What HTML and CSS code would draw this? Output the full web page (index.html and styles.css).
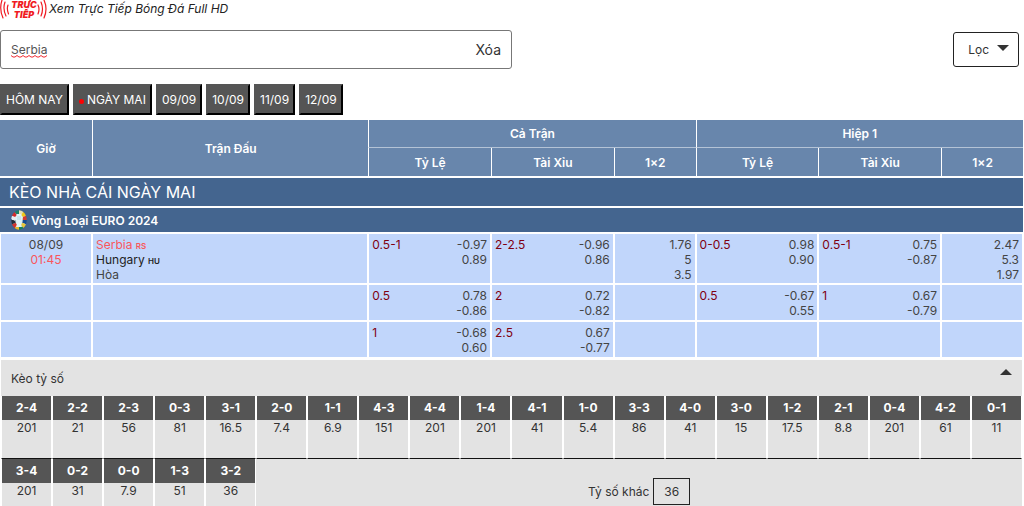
FILE: index.html
```html
<!DOCTYPE html>
<html lang="vi">
<head>
<meta charset="utf-8">
<title>Kèo nhà cái ngày mai</title>
<link rel="stylesheet" href="styles.css">
</head>
<body>
<a class="live" href="#">
  <svg class="live-logo" viewBox="0 0 47 20" aria-label="Trực tiếp" role="img">
    <g fill="none" stroke="#f01a22" stroke-width="1.2" stroke-linecap="round">
      <path d="M2 0Q-1 9 3 18M5 2Q2.500 9 6 16M8 5Q6.500 9 8.500 14"/>
      <path d="M44 0Q48 9 44 18M41 2Q44 9 41 16M38 5Q40 9 38 14"/>
    </g>
    <text x="24" y="8" class="logo-text">TRỰC</text>
    <text x="24" y="18" class="logo-text">TIẾP</text>
  </svg>
  <span>Xem Trực Tiếp Bóng Đá Full HD</span>
</a>

<form class="filters">
  <div class="search">
    <input class="search-input" type="text" value="Serbia" aria-label="Tìm kiếm">
    <svg class="squiggle" viewBox="0 0 36 3" aria-hidden="true"><path d="M0 .5L2 2L4 2L6 .5L8 2L10 2L12 .5L14 2L16 2L18 .5L20 2L22 2L24 .5L26 2L28 2L30 .5L32 2L34 2L36 .5"/></svg>
    <button class="clear" type="button">Xóa</button>
  </div>
  <button class="filter" type="button">Lọc <svg class="caret" viewBox="0 0 12 6"><path d="M0 0H12L6 6Z"/></svg></button>
</form>

<nav class="days">
  <button type="button">HÔM NAY</button>
  <button type="button"><i class="dot"></i>NGÀY MAI</button>
  <button type="button">09/09</button>
  <button type="button">10/09</button>
  <button type="button">11/09</button>
  <button type="button">12/09</button>
</nav>

<div class="odds-wrap">
<table class="odds">
  <colgroup><col class="w-time"><col class="w-match"><col class="w-odd"><col class="w-odd"><col class="w-x"><col class="w-odd"><col class="w-odd"><col class="w-x"></colgroup>
  <thead>
    <tr><th rowspan="2">Giờ</th><th rowspan="2">Trận Đấu</th><th class="group" colspan="3">Cả Trận</th><th class="group" colspan="3">Hiệp 1</th></tr>
    <tr><th>Tỷ Lệ</th><th>Tài Xỉu</th><th>1×2</th><th>Tỷ Lệ</th><th>Tài Xỉu</th><th>1×2</th></tr>
  </thead>
  <tbody>
    <tr class="title"><th colspan="8">KÈO NHÀ CÁI NGÀY MAI</th></tr>
    <tr class="league"><th colspan="8"><div class="league-name">
      <svg class="euro" viewBox="0 0 16 20" aria-hidden="true">
        <ellipse cx="8" cy="10" rx="7" ry="9" fill="#d9eef0"/>
        <g fill="none" stroke-width="4" stroke-dasharray="1 11">
          <ellipse cx="8" cy="10" rx="5.700" ry="7.700" pathLength="12" stroke="#174c91"/>
          <ellipse cx="8" cy="10" rx="5.700" ry="7.700" pathLength="12" stroke="#e9c63a" stroke-dashoffset="-1"/>
          <ellipse cx="8" cy="10" rx="5.700" ry="7.700" pathLength="12" stroke="#16805a" stroke-dashoffset="-2"/>
          <ellipse cx="8" cy="10" rx="5.700" ry="7.700" pathLength="12" stroke="#e9b92a" stroke-dashoffset="-3"/>
          <ellipse cx="8" cy="10" rx="5.700" ry="7.700" pathLength="12" stroke="#d2322c" stroke-dashoffset="-4"/>
          <ellipse cx="8" cy="10" rx="5.700" ry="7.700" pathLength="12" stroke="#262d3b" stroke-dashoffset="-5"/>
          <ellipse cx="8" cy="10" rx="5.700" ry="7.700" pathLength="12" stroke="#e8edf0" stroke-dashoffset="-6"/>
          <ellipse cx="8" cy="10" rx="5.700" ry="7.700" pathLength="12" stroke="#d42b2b" stroke-dashoffset="-7"/>
          <ellipse cx="8" cy="10" rx="5.700" ry="7.700" pathLength="12" stroke="#1b8068" stroke-dashoffset="-8"/>
          <ellipse cx="8" cy="10" rx="5.700" ry="7.700" pathLength="12" stroke="#e9e2b2" stroke-dashoffset="-9"/>
          <ellipse cx="8" cy="10" rx="5.700" ry="7.700" pathLength="12" stroke="#f0c818" stroke-dashoffset="-10"/>
          <ellipse cx="8" cy="10" rx="5.700" ry="7.700" pathLength="12" stroke="#d43b30" stroke-dashoffset="-11"/>
        </g>
        <path d="M5.500 4H10.500L10.500 5.500L12 7L11 10L9.500 12L10 14L11 17H5L6 14L6.500 12L5 10L4 7L5.500 5.500Z" fill="#dff3f6"/>
        <path d="M7 6V10M9 6V10" stroke="#9ccbd6" stroke-width=".6"/>
      </svg>
      Vòng Loại EURO 2024</div></th></tr>
    <tr>
      <td class="time">08/09<br><span class="hot">01:45</span></td>
      <td class="teams"><span class="hot">Serbia <small>RS</small></span><br><span class="away">Hungary <small>HU</small></span><br>Hòa</td>
      <td><div class="pair"><b>0.5-1</b><span>-0.97<br>0.89</span></div></td>
      <td><div class="pair"><b>2-2.5</b><span>-0.96<br>0.86</span></div></td>
      <td class="x12">1.76<br>5<br>3.5</td>
      <td><div class="pair"><b>0-0.5</b><span>0.98<br>0.90</span></div></td>
      <td><div class="pair"><b>0.5-1</b><span>0.75<br>-0.87</span></div></td>
      <td class="x12">2.47<br>5.3<br>1.97</td>
    </tr>
    <tr>
      <td></td><td></td>
      <td><div class="pair"><b>0.5</b><span>0.78<br>-0.86</span></div></td>
      <td><div class="pair"><b>2</b><span>0.72<br>-0.82</span></div></td>
      <td></td>
      <td><div class="pair"><b>0.5</b><span>-0.67<br>0.55</span></div></td>
      <td><div class="pair"><b>1</b><span>0.67<br>-0.79</span></div></td>
      <td></td>
    </tr>
    <tr>
      <td></td><td></td>
      <td><div class="pair"><b>1</b><span>-0.68<br>0.60</span></div></td>
      <td><div class="pair"><b>2.5</b><span>0.67<br>-0.77</span></div></td>
      <td></td><td></td><td></td><td></td>
    </tr>
  </tbody>
</table>
</div>

<section class="scores">
  <button class="scores-head" type="button">Kèo tỷ số <svg class="caret" viewBox="0 0 12 6"><path d="M0 6H12L6 0Z"/></svg></button>
  <div class="score-grid">
    <dl><dt>2-4</dt><dd>201</dd></dl>
    <dl><dt>2-2</dt><dd>21</dd></dl>
    <dl><dt>2-3</dt><dd>56</dd></dl>
    <dl><dt>0-3</dt><dd>81</dd></dl>
    <dl><dt>3-1</dt><dd>16.5</dd></dl>
    <dl><dt>2-0</dt><dd>7.4</dd></dl>
    <dl><dt>1-1</dt><dd>6.9</dd></dl>
    <dl><dt>4-3</dt><dd>151</dd></dl>
    <dl><dt>4-4</dt><dd>201</dd></dl>
    <dl><dt>1-4</dt><dd>201</dd></dl>
    <dl><dt>4-1</dt><dd>41</dd></dl>
    <dl><dt>1-0</dt><dd>5.4</dd></dl>
    <dl><dt>3-3</dt><dd>86</dd></dl>
    <dl><dt>4-0</dt><dd>41</dd></dl>
    <dl><dt>3-0</dt><dd>15</dd></dl>
    <dl><dt>1-2</dt><dd>17.5</dd></dl>
    <dl><dt>2-1</dt><dd>8.8</dd></dl>
    <dl><dt>0-4</dt><dd>201</dd></dl>
    <dl><dt>4-2</dt><dd>61</dd></dl>
    <dl><dt>0-1</dt><dd>11</dd></dl>
    <dl class="last"><dt>3-4</dt><dd>201</dd></dl>
    <dl class="last"><dt>0-2</dt><dd>31</dd></dl>
    <dl class="last"><dt>0-0</dt><dd>7.9</dd></dl>
    <dl class="last"><dt>1-3</dt><dd>51</dd></dl>
    <dl class="last"><dt>3-2</dt><dd>36</dd></dl>
    <div class="other">Tỷ số khác <span class="other-odd">36</span></div>
  </div>
</section>
</body>
</html>
```
FILE: styles.css
```css
* { box-sizing: border-box; }
body {
  margin: 0;
  font: 12px/15px Inter, "Noto Sans", sans-serif;
  color: #333;
  background: #fff;
}
button, input { font: inherit; color: inherit; }
button { cursor: pointer; }

.live {
  display: flex;
  gap: 2px;
  height: 30px;
  color: #222;
  font-style: italic;
  line-height: 18px;
  text-decoration: none;
}
.live-logo { width: 47px; height: 20px; overflow: visible; }
.logo-text {
  font: italic 900 9px Inter, sans-serif;
  fill: #f01a22;
  text-anchor: middle;
}

.filters {
  display: flex;
  justify-content: space-between;
  align-items: center;
  padding-right: 5px;
}
.search {
  position: relative;
  display: flex;
  flex: 0 0 auto;
  width: 50vw;
  height: 39px;
  border: 1px solid #777;
  border-radius: 3px;
}
.search-input {
  flex: 1;
  min-width: 0;
  padding: 0 10px;
  border: 0;
  outline: 0;
  background: none;
  color: #555;
}
/* Spelling mark under the typed word */
.squiggle {
  position: absolute;
  left: 10px;
  bottom: 10px;
  width: 36px;
  height: 3px;
  fill: none;
  stroke: #f02a30;
  pointer-events: none;
}
.clear {
  padding: 0 10px;
  border: 0;
  background: none;
  font-size: 14px;
}
.filter {
  display: flex;
  align-items: center;
  gap: 8px;
  height: 35px;
  padding: 0 9px 0 14px;
  border: 1px solid #222;
  border-radius: 3px;
  background: #fff;
}
.caret { width: 12px; height: 6px; fill: #333; }
.filter .caret { margin-bottom: 4px; }

.days { display: flex; gap: 4px; margin: 15px 0 5px; }
.days button {
  height: 31px;
  padding: 0 4px;
  border: 2px solid;
  border-color: #555 #000 #000 #555;
  background: #555;
  color: #fff;
}
.dot {
  display: inline-block;
  width: 5px;
  height: 5px;
  margin-right: 3px;
  border-radius: 50%;
  background: #f00;
}

.odds-wrap { padding-right: 1px; }
.odds {
  width: 100%;
  table-layout: fixed;
  border-spacing: 0;
}
.w-time { width: 9%; }
.w-match { width: 27%; }
.w-odd { width: 12%; }
.w-x { width: 8%; }
.odds th { padding: 0; color: #fff; font-weight: 600; }
thead th {
  height: 28px;
  border-left: 1px solid #fff;
  background: #6886ac;
}
thead th:first-child[rowspan] { border-left: 0; }
thead .group { border-bottom: 1px solid #b4c3d6; }
.title th, .league th {
  border-top: 2px solid #fff;
  background: #44658f;
  text-align: left;
}
.odds .title th {
  height: 30px;
  padding-left: 9px;
  font-size: 16px;
  font-weight: 400;
}
.league th { height: 27px; border-bottom: 1px solid #fff; }
.league-name { display: flex; align-items: center; gap: 4px; padding-left: 11px; }
.euro { width: 16px; height: 20px; }
td {
  height: 37px;
  padding: 3px 3px 1px;
  border: 1px solid #fff;
  background: #c1d6fb;
  color: #444;
  vertical-align: top;
}
.time { text-align: center; }
.hot { color: #f9575c; }
.away { color: #222; }
small { font-size: 8px; font-weight: 600; line-height: 1; }
.pair { display: flex; justify-content: space-between; }
.pair span, .x12 { text-align: right; }
.pair b { color: #800010; font-weight: 400; }

.scores {
  margin: 2px 2px 0 1px;
  background: #e3e3e3;
}
.scores-head {
  display: flex;
  justify-content: space-between;
  align-items: center;
  width: 100%;
  height: 36px;
  padding: 0 10px;
  border: 0;
  background: none;
}
.scores-head .caret { margin-bottom: 12px; }
.score-grid { display: grid; grid-template-columns: repeat(20, 1fr); }
dl {
  height: 63px;
  margin: 0;
  border: solid #fff;
  border-width: 0 1px;
  border-bottom: 1px solid #111;
  text-align: center;
}
dl.last { height: 47px; border-bottom: 0; }
dt {
  background: #555;
  color: #fff;
  font-weight: 700;
  line-height: 24px;
}
dd { margin: 0; }
.other {
  grid-column: 6 / -1;
  display: flex;
  justify-content: center;
  align-items: center;
  gap: 4px;
  padding-top: 17px;
}
.other-odd { padding: 5px 10px; border: 1px solid #222; }
```
